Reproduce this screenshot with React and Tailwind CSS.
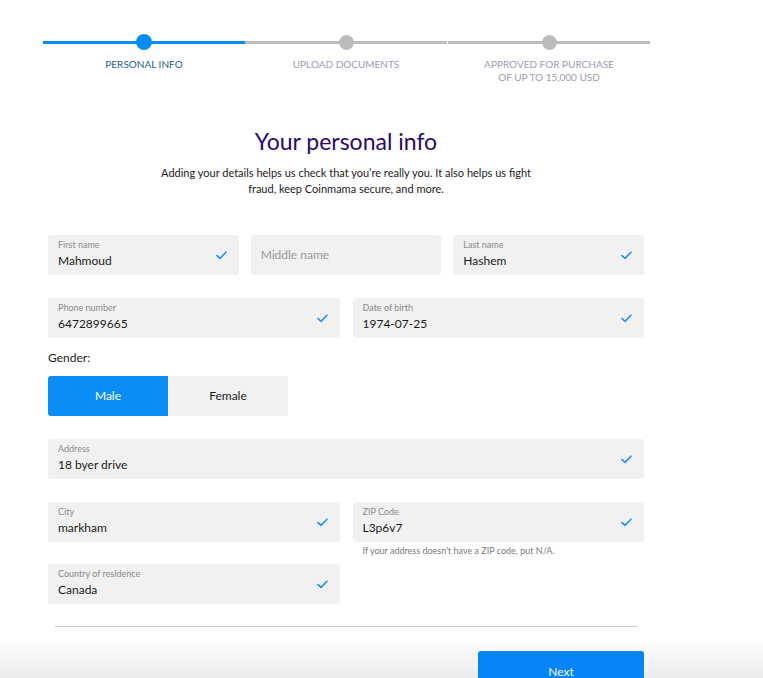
import React from "react";

const steps = [
  { label: ["PERSONAL INFO"], active: true },
  { label: ["UPLOAD DOCUMENTS"], active: false },
  { label: ["APPROVED FOR PURCHASE", "OF UP TO 15,000 USD"], active: false },
];

function Check() {
  return (
    <svg width="11" height="9" viewBox="0 0 11 9" fill="none" className="shrink-0">
      <path d="M1 4.6 L4 7.4 L10 1.2" stroke="#1e8fff" strokeWidth="1.6" strokeLinecap="round" strokeLinejoin="round" />
    </svg>
  );
}

function Field({ label, value, placeholder, check = true, className = "" }) {
  return (
    <div className={`h-10 bg-[#f1f1f1] rounded-[3px] flex items-center pl-[10px] pr-[12px] ${className}`}>
      <div className={`flex-1 min-w-0 ${placeholder ? "" : "pb-[2px]"}`}>
        {placeholder ? (
          <p className="text-[12px] text-[#9a9a9a]">{placeholder}</p>
        ) : (
          <>
            <p className="text-[9px] leading-[11px] text-[#8a8a8a]">{label}</p>
            <p className="text-[12px] leading-[16px] mt-[3px] text-[#1a1a1a]">{value}</p>
          </>
        )}
      </div>
      {check && <Check />}
    </div>
  );
}

export default function App() {
  return (
    <div className="relative w-[763px] h-[678px] overflow-hidden bg-white font-['Lato',sans-serif]">
      {/* Stepper */}
      <div className="flex ml-[43px] w-[607px] pt-[34px]">
        {steps.map((s, i) => (
          <div key={i} className={`flex flex-col items-center ${i === 2 ? "w-[202px] ml-[1px]" : "w-[202px]"}`}>
            <div className="relative w-full h-4 flex items-center justify-center">
              <div className={`absolute left-0 right-0 top-[6.5px] h-[3px] ${s.active ? "bg-[#0a8df0]" : "bg-[#bcbcbc]"}`} />
              <div className={`relative rounded-full ${s.active ? "w-4 h-4 bg-[#0a8df0]" : "w-[15px] h-[15px] bg-[#bcbcbc]"}`} />
            </div>
            <div className={`mt-[8px] text-[10px] leading-[13px] text-center ${s.active ? "text-[#1d6189]" : "text-[#9c9cb0]"}`}>
              {s.label.map((l) => (
                <p key={l}>{l}</p>
              ))}
            </div>
          </div>
        ))}
      </div>

      {/* Form column */}
      <div className="ml-[48px] w-[596px]">
        <div className="mt-[42px] text-center">
          <h1 className="text-[23px] leading-[30px] text-[#2b0a6b]">Your personal info</h1>
          <p className="mt-[9px] text-[11px] leading-[16px] text-[#1a1a1a]">
            Adding your details helps us check that you’re really you. It also helps us fight
            <br />
            fraud, keep Coinmama secure, and more.
          </p>
        </div>

        <div className="mt-[38px] grid grid-cols-3 gap-x-[12px]">
          <Field label="First name" value="Mahmoud" />
          <Field placeholder="Middle name" check={false} />
          <Field label="Last name" value="Hashem" />
        </div>
        <div className="grid grid-cols-2 gap-x-[13px] mt-[23px]">
          <Field label="Phone number" value="6472899665" />
          <Field label="Date of birth" value="1974-07-25" />
        </div>

        <p className="mt-[12px] text-[12px] leading-[16px] text-[#1a1a1a]">Gender:</p>
        <div className="mt-[10px] flex w-[240px] h-10 rounded-[3px] overflow-hidden text-[12px]">
          <div className="w-[120px] bg-[#0a8df5] text-white flex items-center justify-center">Male</div>
          <div className="flex-1 bg-[#f1f1f1] text-[#1a1a1a] flex items-center justify-center">Female</div>
        </div>

        <Field label="Address" value="18 byer drive" className="mt-[23px]" />

        <div className="grid grid-cols-2 gap-x-[13px] mt-[23px]">
          <Field label="City" value="markham" />
          <div>
            <Field label="ZIP Code" value="L3p6v7" />
            <p className="mt-[3px] ml-[10px] text-[9px] leading-[11px] text-[#7a7a7a]">
              If your address doesn't have a ZIP code, put N/A.
            </p>
          </div>
        </div>

        <div className="grid grid-cols-2 gap-x-[13px] mt-[8px]">
          <Field label="Country of residence" value="Canada" />
        </div>
      </div>

      {/* Footer */}
      <div className="absolute left-0 right-0 top-[640px] bottom-0 bg-gradient-to-b from-white to-[#ececec]" />
      <div className="relative ml-[55px] w-[582px] h-px bg-[#c8c8c8] mt-[22px]" />
      <div className="relative flex justify-end w-[644px] mt-[24px]">
        <button className="w-[166px] h-10 bg-[#0585f7] rounded-t-[3px] text-white text-[12px] pt-[12px] flex justify-center items-start">
          Next
        </button>
      </div>
    </div>
  );
}
